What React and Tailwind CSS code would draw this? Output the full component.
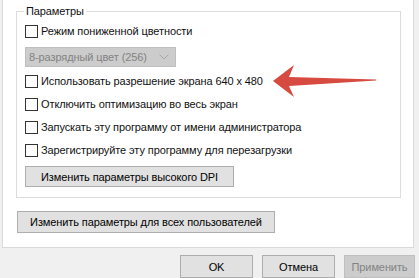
import React from "react";

function Check({ label }) {
  return (
    <div className="flex items-center h-[16px]">
      <div className="w-[13px] h-[13px] border border-[#333333] bg-white shrink-0" />
      <span className="ml-[3px] whitespace-nowrap">{label}</span>
    </div>
  );
}

function Btn({ children, className = "" }) {
  return (
    <div
      className={
        "flex items-center justify-center border border-[#adadad] bg-[#e1e1e1] text-black whitespace-nowrap " +
        className
      }
    >
      {children}
    </div>
  );
}

export default function App() {
  return (
    <div
      className="w-[419px] h-[278px] bg-[#f0f0f0] overflow-hidden relative text-[11px] leading-[16px] text-[#111111] tracking-[-0.1px]"
      style={{ fontFamily: '"Liberation Sans", Arial, sans-serif' }}
    >
      <div className="ml-[2px] w-[412px] h-[248px] bg-white border-x border-b border-[#dadada] flex flex-col">
        <div className="ml-[13px] mt-[11px] w-[385px] h-[187px] border border-[#dcdcdc] relative flex flex-col pl-[8px]">
          <div className="absolute left-[7px] top-[-9px] px-[2px] bg-white leading-[16px]">
            Параметры
          </div>
          <div className="mt-[11px]">
            <Check label="Режим пониженной цветности" />
          </div>
          <div className="mt-[8px] w-[151px] h-[20px] bg-[#cccccc] border border-[#bfbfbf] flex items-center justify-between pl-[3px] pr-[6px] text-[#838383]">
            <span className="whitespace-nowrap">8-разрядный цвет (256)</span>
            <svg width="10" height="6" viewBox="0 0 10 6">
              <path d="M0.5 0.5 L5 5 L9.5 0.5" fill="none" stroke="#a8a8a8" strokeWidth="1" />
            </svg>
          </div>
          <div className="mt-[6px]">
            <Check label="Использовать разрешение экрана 640 x 480" />
          </div>
          <div className="mt-[7px]">
            <Check label="Отключить оптимизацию во весь экран" />
          </div>
          <div className="mt-[7px]">
            <Check label="Запускать эту программу от имени администратора" />
          </div>
          <div className="mt-[7px]">
            <Check label="Зарегистрируйте эту программу для перезагрузки" />
          </div>
          <Btn className="mt-[8px] w-[209px] h-[21px]">Изменить параметры высокого DPI</Btn>
        </div>
        <Btn className="ml-[14px] mt-[13px] w-[258px] h-[22px]">
          Изменить параметры для всех пользователей
        </Btn>
      </div>
      <div className="flex mt-[7px] ml-[180px] gap-[9px]">
        <Btn className="w-[73px] h-[23px]">OK</Btn>
        <Btn className="w-[73px] h-[23px]">Отмена</Btn>
        <div className="w-[71px] h-[23px] flex items-center justify-center border border-[#bfbfbf] bg-[#cccccc] text-[#838383]">
          Применить
        </div>
      </div>
      <svg
        className="absolute left-0 top-0 pointer-events-none"
        width="419"
        height="278"
        viewBox="0 0 419 278"
      >
        <path
          d="M273 81 L294 65 L289 77 L376 79.5 L376 80.5 L289 86 L294 97 Z"
          fill="#d64a3f"
        />
      </svg>
    </div>
  );
}
